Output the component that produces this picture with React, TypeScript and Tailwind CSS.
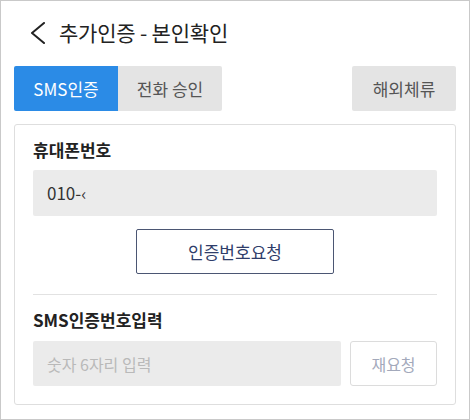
const font = { fontFamily: '"Noto Sans CJK KR", "Noto Sans", sans-serif' };

export default function App() {
  return (
    <div
      className="w-[470px] h-[420px] border border-[#c9c9c9] bg-white text-[#222] overflow-hidden"
      style={font}
    >
      {/* Header */}
      <div className="h-[63px] flex items-center pl-[29px] gap-[13px]">
        <svg width="16" height="22" viewBox="0 0 16 22" fill="none" className="shrink-0">
          <path d="M14 1 L2 11 L14 21" stroke="#222" strokeWidth="2" strokeLinecap="round" strokeLinejoin="round" />
        </svg>
        <span className="text-[21px] leading-none tracking-[-0.2px]">추가인증 - 본인확인</span>
      </div>

      {/* Tabs */}
      <div className="mx-[13px] mt-[2px] flex items-stretch h-[45px]">
        <button className="w-[104px] bg-[#2b8be6] text-white text-[17px] rounded-l-[2px]">SMS인증</button>
        <button className="w-[104px] bg-[#e4e4e4] text-[#555] text-[17px] rounded-r-[2px]">전화 승인</button>
        <div className="flex-1" />
        <button className="w-[104px] bg-[#e4e4e4] text-[#555] text-[17px] rounded-[2px]">해외체류</button>
      </div>

      {/* Card */}
      <div className="mx-[13px] mt-[13px] border border-[#dedede] rounded-[3px] px-[18px] pt-[13px] pb-[18px]">
        <div className="text-[17px] font-bold leading-[24px]">휴대폰번호</div>
        <div className="mt-[8px] h-[46px] bg-[#ebebeb] rounded-[2px] flex items-center pl-[14px] text-[17px] text-[#333]">
          010-‹
        </div>
        <button className="mt-[13px] mx-auto flex items-center justify-center w-[198px] h-[45px] border border-[#4b5673] rounded-[2px] text-[#2f3d6a] text-[17px]">
          인증번호요청
        </button>
        <div className="mt-[20px] h-px bg-[#e2e2e2]" />
        <div className="mt-[13px] text-[17px] font-bold leading-[24px]">SMS인증번호입력</div>
        <div className="mt-[9px] flex gap-[9px] h-[45px]">
          <div className="flex-1 bg-[#ebebeb] rounded-[2px] flex items-center pl-[14px] text-[16px] text-[#b9b9b9]">
            숫자 6자리 입력
          </div>
          <button className="w-[87px] border border-[#dcdcdc] rounded-[3px] bg-white text-[#a3a9bb] text-[16px]">
            재요청
          </button>
        </div>
      </div>
    </div>
  );
}
